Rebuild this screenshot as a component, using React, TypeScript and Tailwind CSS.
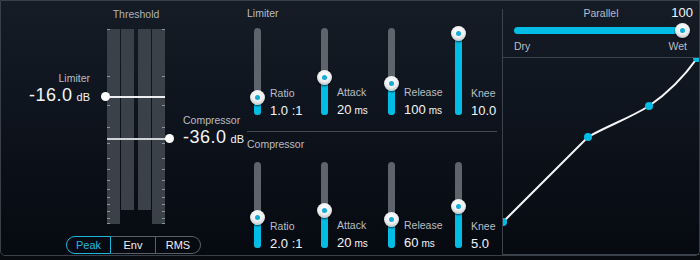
import React from "react";

const CYAN = "#00bde6";

function Knob({ className, style }: { className?: string; style?: React.CSSProperties }) {
  return (
    <div
      className={
        "flex h-[15px] w-[15px] items-center justify-center rounded-full bg-[radial-gradient(circle_at_50%_35%,#ffffff_0%,#eceef0_50%,#a6abb1_100%)] shadow-[0_1px_2px_rgba(0,0,0,0.7)] " +
        (className ?? "")
      }
      style={style}
    >
      <div className="h-[5px] w-[5px] rounded-full bg-[#12acd6]" />
    </div>
  );
}

function VSlider({ knob, tall }: { knob: number; tall: boolean }) {
  return (
    <div className={"relative w-[7px] shrink-0 rounded-full bg-[#5d646c] " + (tall ? "h-[87px]" : "h-[86px]")}>
      <div className="absolute bottom-0 left-0 w-[7px] rounded-b-full bg-[#00bde6]" style={{ top: knob }} />
      <Knob className="absolute left-[-4px]" style={{ top: knob - 7.5 }} />
    </div>
  );
}

type Unit = { label: string; value: string; unit?: string; knob: number };

function SliderRow({ units, tall }: { units: Unit[]; tall: boolean }) {
  return (
    <div className="ml-[7px] flex">
      {units.map((u) => (
        <div key={u.label} className="flex w-[67px] shrink-0 items-end gap-[9px]">
          <VSlider knob={u.knob} tall={tall} />
          <div className="-mb-[3px] flex flex-col">
            <span className="text-[10.5px] leading-[13px] text-[#b9bec4]">{u.label}</span>
            <span className="mt-[3px] whitespace-nowrap text-[13px] leading-[15px] text-[#f3f5f6]">
              {u.value}
              {u.unit ? <span className="ml-[3px] text-[10px]">{u.unit}</span> : null}
            </span>
          </div>
        </div>
      ))}
    </div>
  );
}

const TICKS = [0, 47, 76, 98, 114, 129, 140, 151, 160, 168, 175, 182, 189, 194];

function MeterBar({ tall, tickSide }: { tall: boolean; tickSide?: "left" | "right" }) {
  return (
    <div className={"relative w-[13px] bg-[#3b4149] " + (tall ? "h-[195px]" : "h-[181px]")}>
      {tickSide
        ? TICKS.map((t) => (
            <div
              key={t}
              className={"absolute h-px w-[3px] bg-[#8f959c] " + (tickSide === "left" ? "left-0" : "right-0")}
              style={{ top: t }}
            />
          ))
        : null}
    </div>
  );
}

const limiter: Unit[] = [
  { label: "Ratio", value: "1.0 :1", knob: 69 },
  { label: "Attack", value: "20", unit: "ms", knob: 49 },
  { label: "Release", value: "100", unit: "ms", knob: 55 },
  { label: "Knee", value: "10.0", knob: 5 },
];

const compressor: Unit[] = [
  { label: "Ratio", value: "2.0 :1", knob: 55 },
  { label: "Attack", value: "20", unit: "ms", knob: 48 },
  { label: "Release", value: "60", unit: "ms", knob: 57 },
  { label: "Knee", value: "5.0", knob: 44 },
];

export default function App() {
  return (
    <div className="h-[260px] w-[700px] overflow-hidden bg-[#080b10] font-['Liberation_Sans',Arial,sans-serif]">
      <div className="flex h-[256px] w-[700px] rounded-b-[5px] border border-[#394049] bg-[linear-gradient(180deg,#151c26_0%,#0e141d_45%,#060910_100%)]">
        {/* Left: threshold meter */}
        <div className="relative w-[239px] shrink-0 pt-[6px]">
          <div className="ml-[106px] w-[58px] text-center text-[10.5px] leading-[14px] text-[#aeb4ba]">Threshold</div>
          <div className="ml-[106px] mt-[8px] flex w-[58px] items-start">
            <MeterBar tall tickSide="left" />
            <div className="ml-px">
              <MeterBar tall={false} />
            </div>
            <div className="ml-[4px]">
              <MeterBar tall={false} />
            </div>
            <div className="ml-px">
              <MeterBar tall tickSide="right" />
            </div>
          </div>
          <div className="ml-[65px] mt-[12px] flex h-[18px] text-[11px] leading-[16px]">
            <div className="flex w-[45px] items-center justify-center rounded-l-full border-[1.5px] border-[#1db6de] text-[#22b9e0]">
              Peak
            </div>
            <div className="flex w-[45px] items-center justify-center border-y border-r border-[#5a6068] text-[#eef0f2]">
              Env
            </div>
            <div className="flex w-[45px] items-center justify-center rounded-r-full border-y border-r border-[#5a6068] text-[#eef0f2]">
              RMS
            </div>
          </div>

          {/* Limiter threshold handle */}
          <div className="absolute left-[104px] top-[95px] h-[1.5px] w-[60px] bg-[#eceef0]" />
          <div className="absolute left-[100px] top-[91px] h-[9px] w-[9px] rounded-full bg-white" />
          <div className="absolute right-[150px] top-[70px] text-right">
            <div className="text-[10.5px] leading-[14px] text-[#b9bec4]">Limiter</div>
            <div className="whitespace-nowrap text-[18px] leading-[20px] tracking-[0.5px] text-[#f3f5f6]">
              -16.0<span className="ml-[4px] text-[11px] tracking-normal">dB</span>
            </div>
          </div>

          {/* Compressor threshold handle */}
          <div className="absolute left-[106px] top-[137px] h-[1.5px] w-[62px] bg-[#cfd3d6]" />
          <div className="absolute left-[164px] top-[133px] h-[9px] w-[9px] rounded-full bg-white" />
          <div className="absolute left-[182px] top-[112px]">
            <div className="text-[10.5px] leading-[14px] text-[#b9bec4]">Compressor</div>
            <div className="whitespace-nowrap text-[18px] leading-[20px] tracking-[0.5px] text-[#f3f5f6]">
              -36.0<span className="ml-[4px] text-[11px] tracking-normal">dB</span>
            </div>
          </div>
        </div>

        {/* Center: limiter & compressor sliders */}
        <div className="w-[262px] shrink-0 pl-[7px] pr-[5px] pt-[5px]">
          <div className="text-[10.5px] leading-[14px] text-[#b9bec4]">Limiter</div>
          <div className="mt-[8px]">
            <SliderRow units={limiter} tall />
          </div>
          <div className="mt-[16px] h-px bg-[#454b54]" />
          <div className="mt-[5px] text-[10.5px] leading-[14px] text-[#b9bec4]">Compressor</div>
          <div className="mt-[11px]">
            <SliderRow units={compressor} tall={false} />
          </div>
        </div>

        {/* Right: parallel + curve */}
        <div className="mt-[8px] flex min-w-0 flex-1 flex-col border-l border-[#3c434c]">
          <div className="h-[48px] px-[11px]">
            <div className="relative -mt-[2px] h-[12px] text-center text-[10.5px] leading-[12px] text-[#b9bec4]">
              Parallel
              <span className="absolute right-[-5px] top-[-1px] text-[13px] leading-[14px] text-[#f3f5f6]">100</span>
            </div>
            <div className="mt-[4px] flex h-[14px] items-center pr-[-2px]">
              <div className="relative h-[7px] w-[176px] rounded-full bg-[#00bde6]">
                <Knob className="absolute right-[-1.5px] top-[-4px]" />
              </div>
            </div>
            <div className="mt-[3px] flex justify-between pr-[1px] text-[10.5px] leading-[12px] text-[#b9bec4]">
              <span>Dry</span>
              <span>Wet</span>
            </div>
          </div>
          <div className="relative flex-1 border-y border-[#3c434c]">
            <svg className="absolute inset-0 block h-full w-full" viewBox="503 58 196 196" preserveAspectRatio="none">
              <path
                d="M503 222 L588 137 C 607 126 630 118 649 106 C 668 93 686 74 698 57"
                fill="none"
                stroke="#f4f5f6"
                strokeWidth="2"
                strokeLinecap="round"
              />
              <circle cx="503" cy="222" r="4" fill={CYAN} />
              <circle cx="588" cy="137" r="4" fill={CYAN} />
              <circle cx="649" cy="106" r="4" fill={CYAN} />
              <circle cx="697" cy="58" r="4" fill={CYAN} />
            </svg>
          </div>
        </div>
      </div>
    </div>
  );
}
